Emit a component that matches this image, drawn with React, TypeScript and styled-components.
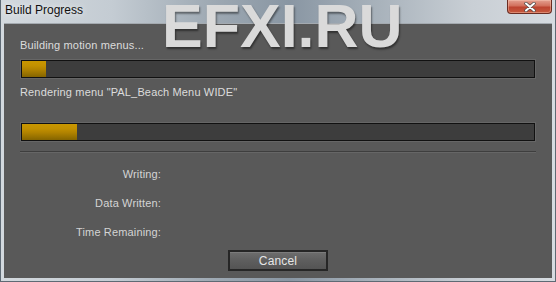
import React from "react";
import styled, { createGlobalStyle } from "styled-components";

const GlobalStyle = createGlobalStyle`
	html, body {
		margin: 0;
		padding: 0;
	}
	body {
		font-family: "Liberation Sans", Arial, sans-serif;
	}
`;

const stats = ["Writing:", "Data Written:", "Time Remaining:"];

const App = () => {
	return (
		<>
			<GlobalStyle />
			<Window>
				<TitleBar>
					<Title>Build Progress</Title>
					<CloseButton>
						<svg width="14" height="10" viewBox="0 0 14 10">
							<path
								d="M3 1.5 L11 8.5 M11 1.5 L3 8.5"
								stroke="#4a4a4a"
								strokeWidth="3.4"
								strokeLinecap="round"
							/>
							<path
								d="M3 1.5 L11 8.5 M11 1.5 L3 8.5"
								stroke="#ffffff"
								strokeWidth="2"
								strokeLinecap="round"
							/>
						</svg>
					</CloseButton>
				</TitleBar>
				<Client>
					<Status>Building motion menus...</Status>
					<Bar top={8}>
						<Fill style={{ width: "24px" }} />
					</Bar>
					<Status top={7}>Rendering menu "PAL_Beach Menu WIDE"</Status>
					<Bar top={24}>
						<Fill style={{ width: "55px" }} />
					</Bar>
					<Separator />
					<Stats>
						{stats.map((s) => (
							<StatRow key={s}>
								<StatLabel>{s}</StatLabel>
								<StatValue />
							</StatRow>
						))}
					</Stats>
					<Footer>
						<Button>Cancel</Button>
					</Footer>
				</Client>
				<Watermark>EFXI.RU</Watermark>
			</Window>
		</>
	);
};

export default App;

const Window = styled.div`
	position: relative;
	width: 556px;
	height: 282px;
	box-sizing: border-box;
	display: flex;
	flex-direction: column;
	padding: 0 3px 3px 3px;
	overflow: hidden;
	background: linear-gradient(
		90deg,
		#d3d9de 0%,
		#c4ccd3 20%,
		#9ea9b3 38%,
		#8996a3 52%,
		#a8b2bb 68%,
		#c9cfd5 85%,
		#d6dbe0 100%
	);
	border: 1px solid #5e6a74;
	border-top: none;
`;

const TitleBar = styled.div`
	height: 23px;
	display: flex;
	justify-content: space-between;
	align-items: flex-start;
	flex-shrink: 0;
`;

const Title = styled.div`
	font-size: 12px;
	color: #101010;
	padding: 3px 0 0 1px;
	text-shadow: 0 0 6px rgba(255, 255, 255, 0.9);
`;

const CloseButton = styled.div`
	width: 45px;
	height: 14px;
	box-sizing: border-box;
	display: flex;
	align-items: center;
	justify-content: center;
	border: 1px solid #6a2c22;
	border-top: none;
	border-radius: 0 0 4px 4px;
	background: linear-gradient(180deg, #e4a090 0%, #d2705c 45%, #bd4430 55%, #c65a3e 100%);
	box-shadow: inset 0 0 0 1px rgba(255, 210, 190, 0.4);
`;

const Client = styled.div`
	flex: 1;
	display: flex;
	flex-direction: column;
	background: #595959;
	border-top: 1px solid #a4aab0;
	padding: 14px 16px 0 16px;
	color: #dcdcdc;
	font-size: 11px;
	letter-spacing: 0.15px;
`;

const Status = styled.div<{ top?: number }>`
	height: 14px;
	line-height: 14px;
	margin-top: ${(p) => p.top ?? 0}px;
	white-space: nowrap;
`;

const Bar = styled.div<{ top: number }>`
	height: 18px;
	margin: ${(p) => p.top}px 1px 0 1px;
	box-sizing: border-box;
	background: #3d3d3d;
	border: 1px solid #111;
	box-shadow: 0 0 0 1px #666;
	display: flex;
`;

const Fill = styled.div`
	height: 100%;
	background: linear-gradient(
		180deg,
		#c99700 0%,
		#c29000 30%,
		#b08200 55%,
		#987200 80%,
		#846400 100%
	);
`;

const Separator = styled.div`
	margin-top: 10px;
	height: 1px;
	background: #3e3e3e;
	border-bottom: 1px solid #666;
`;

const Stats = styled.div`
	display: flex;
	flex-direction: column;
	gap: 15px;
	margin-top: 14px;
`;

const StatRow = styled.div`
	display: flex;
	height: 14px;
	line-height: 14px;
`;

const StatLabel = styled.div`
	width: 141px;
	text-align: right;
	color: #d4d4d4;
`;

const StatValue = styled.div`
	flex: 1;
`;

const Footer = styled.div`
	display: flex;
	justify-content: center;
	margin-top: 11px;
`;

const Button = styled.div`
	width: 100px;
	height: 21px;
	box-sizing: border-box;
	border: 2px solid #262626;
	background: linear-gradient(180deg, #6e6e6e 0%, #5e5e5e 50%, #545454 100%);
	box-shadow: inset 0 1px 0 #7c7c7c;
	display: flex;
	align-items: center;
	justify-content: center;
	color: #e6e6e6;
	font-size: 12px;
`;

const Watermark = styled.div`
	position: absolute;
	left: 161px;
	top: 1px;
	font-family: "Liberation Sans", Arial, sans-serif;
	font-weight: bold;
	font-size: 61px;
	line-height: 0.85;
	color: #dadada;
	text-shadow: 1px 2px 2px rgba(0, 0, 0, 0.45);
	pointer-events: none;
`;
